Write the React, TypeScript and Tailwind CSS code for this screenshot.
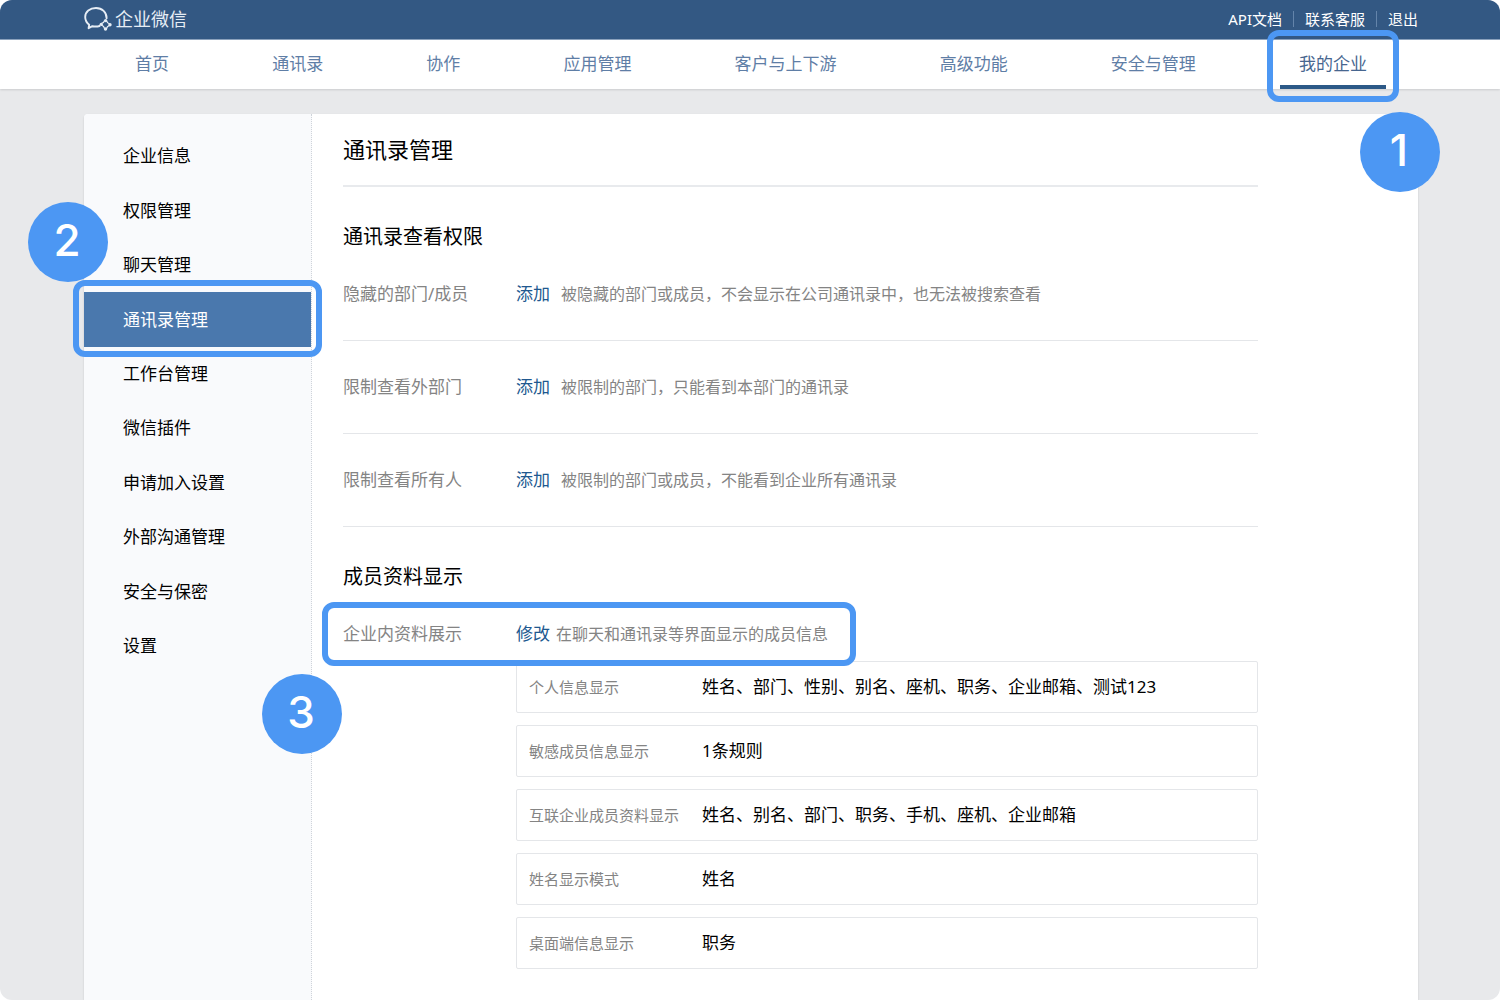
import clsx from "clsx";

const NAV_ITEMS = ["首页", "通讯录", "协作", "应用管理", "客户与上下游", "高级功能", "安全与管理", "我的企业"];

const SIDE_ITEMS = [
  "企业信息",
  "权限管理",
  "聊天管理",
  "通讯录管理",
  "工作台管理",
  "微信插件",
  "申请加入设置",
  "外部沟通管理",
  "安全与保密",
  "设置",
];

const VISIBILITY_RULES = [
  { label: "隐藏的部门/成员", desc: "被隐藏的部门或成员，不会显示在公司通讯录中，也无法被搜索查看" },
  { label: "限制查看外部门", desc: "被限制的部门，只能看到本部门的通讯录" },
  { label: "限制查看所有人", desc: "被限制的部门或成员，不能看到企业所有通讯录" },
];

const PROFILE_FIELDS = [
  { label: "个人信息显示", value: "姓名、部门、性别、别名、座机、职务、企业邮箱、测试123" },
  { label: "敏感成员信息显示", value: "1条规则" },
  { label: "互联企业成员资料显示", value: "姓名、别名、部门、职务、手机、座机、企业邮箱" },
  { label: "姓名显示模式", value: "姓名" },
  { label: "桌面端信息显示", value: "职务" },
];

const Logo = () => (
  <svg width="28" height="26" viewBox="0 0 28 26" fill="none" aria-hidden="true">
    <path
      d="M22.6 12.2C22.8 6.2 18 2 12 2C5.8 2 1.2 5.8 1.2 11C1.2 14.2 2.8 16.9 5.2 18.7L4.6 22.2L8.4 20.2C11 20.8 13.2 20.7 15.6 20"
      stroke="#e6edf5"
      strokeWidth="1.9"
      strokeLinecap="round"
      strokeLinejoin="round"
    />
    <g stroke="#e6edf5" strokeWidth="1.3">
      <path d="M20.6 14.6C20.2 16.2 19 17.2 17.2 17.6M17.4 19C19.2 19.6 20.2 20.8 20.6 22.6M22.4 22.8C22.8 21 23.8 20 25.6 19.4M25.8 18C24 17.4 23 16.4 22.6 14.8" />
    </g>
    <g fill="#e6edf5">
      <circle cx="21.6" cy="14.6" r="1.6" />
      <circle cx="17.2" cy="18.3" r="1.6" />
      <circle cx="21.5" cy="23" r="1.7" />
      <circle cx="26" cy="18.7" r="1.7" />
    </g>
  </svg>
);

// Frame drawn over the thing the current step points at
const Highlight = ({ className }: { className: string }) => (
  <span className={clsx("pointer-events-none absolute z-10 rounded-xl border-6 border-[#4c97f3]", className)} />
);

const StepBadge = ({ step, className }: { step: number; className: string }) => (
  <span
    className={clsx(
      "pointer-events-none absolute z-20 flex size-20 items-center justify-center rounded-full bg-[#4c97f3] pr-[2px] pb-1 font-[Inter,sans-serif] text-[44px] leading-none font-medium text-white",
      className
    )}
  >
    {step}
  </span>
);

const Separator = () => <span className="mx-[11px] h-4 w-px bg-[#6484aa]" />;

export default function App() {
  return (
    <div className="flex min-h-screen flex-col overflow-hidden rounded-xl bg-[#e8e9eb] font-['Noto_Sans','Noto_Sans_CJK_SC',sans-serif] text-[17px] text-black">
      <header className="flex h-10 items-center justify-between border-b border-[#8da3be] bg-[#335883] pr-[82px] pb-px pl-[84px] text-white">
        <a href="#" className="flex items-center gap-[3px] text-lg leading-6 text-[#e6edf5]">
          <Logo />
          企业微信
        </a>
        <div className="flex items-center text-[15px] leading-5">
          <a href="#">API文档</a>
          <Separator />
          <a href="#">联系客服</a>
          <Separator />
          <a href="#">退出</a>
        </div>
      </header>

      <nav className="bg-white pr-[82px] pl-[84px] shadow-[0_1px_2px_rgba(0,0,0,0.12)]">
        <ul className="flex justify-between px-8">
          {NAV_ITEMS.map((item) => {
            const active = item === "我的企业";
            return (
              <li key={item} className="relative">
                <a
                  href="#"
                  className={clsx(
                    "flex h-[49px] items-center border-b-4 px-[19px] pt-[3px]",
                    active ? "border-[#2c5987] text-[#47668f]" : "border-transparent text-[#5f7ea6]"
                  )}
                >
                  {item}
                </a>
                {active && (
                  <>
                    <Highlight className="-inset-x-[13px] -top-[10px] -bottom-[13px]" />
                    <StepBadge step={1} className="top-[72px] -right-[54px]" />
                  </>
                )}
              </li>
            );
          })}
        </ul>
      </nav>

      <div className="mt-[25px] mr-[82px] ml-[84px] flex flex-1 rounded-t bg-white shadow-[0_1px_2px_rgba(0,0,0,0.15)]">
        <aside className="w-[228px] shrink-0 rounded-tl border-r border-dotted border-[#cfd4da] bg-[#f9fafc] pt-[15px]">
          <ul className="grid h-[544px] grid-rows-10">
            {SIDE_ITEMS.map((item) => {
              const active = item === "通讯录管理";
              return (
                <li key={item} className="relative">
                  <a
                    href="#"
                    className={clsx("flex h-full items-center pl-[39px]", active && "bg-[#4a78ad] text-white")}
                  >
                    {item}
                  </a>
                  {active && (
                    <>
                      <Highlight className="-inset-x-[11px] -top-3 -bottom-[10px]" />
                      <StepBadge step={2} className="-top-[90px] -left-[56px]" />
                    </>
                  )}
                </li>
              );
            })}
          </ul>
        </aside>

        <main className="flex-1 pt-[19px] pr-[160px] pb-[30px] pl-[31px]">
          <h1 className="border-b-2 border-[#e8eaed] pb-5 text-[22px] leading-8">通讯录管理</h1>

          <section className="mt-9">
            <h2 className="text-xl leading-7">通讯录查看权限</h2>
            {VISIBILITY_RULES.map((rule) => (
              <div key={rule.label} className="flex items-center border-b border-[#e4e6e9] py-[34px] leading-6 first-of-type:pt-[31px]">
                <span className="w-[173px] text-[#848484]">{rule.label}</span>
                <a href="#" className="text-[#20588f]">添加</a>
                <span className="ml-[11px] text-base text-[#848484]">{rule.desc}</span>
              </div>
            ))}
          </section>

          <section className="mt-9">
            <h2 className="text-xl leading-7">成员资料显示</h2>
            <div className="relative mt-[31px] flex w-fit items-center leading-6">
              <span className="w-[173px] text-[#848484]">企业内资料展示</span>
              <a href="#" className="text-[#20588f]">修改</a>
              <span className="ml-[6px] text-base text-[#848484]">在聊天和通讯录等界面显示的成员信息</span>
              <Highlight className="-inset-y-5 -right-[28px] -left-[21px]" />
              <StepBadge step={3} className="top-[52px] -left-[81px]" />
            </div>
            <dl className="mt-[15px] ml-[173px] flex flex-col gap-3">
              {PROFILE_FIELDS.map((field) => (
                <div key={field.label} className="flex h-[52px] items-center rounded-xs border border-[#e4e6e9] pl-3">
                  <dt className="w-[173px] text-[15px] text-[#848484]">{field.label}</dt>
                  <dd>{field.value}</dd>
                </div>
              ))}
            </dl>
          </section>
        </main>
      </div>
    </div>
  );
}
